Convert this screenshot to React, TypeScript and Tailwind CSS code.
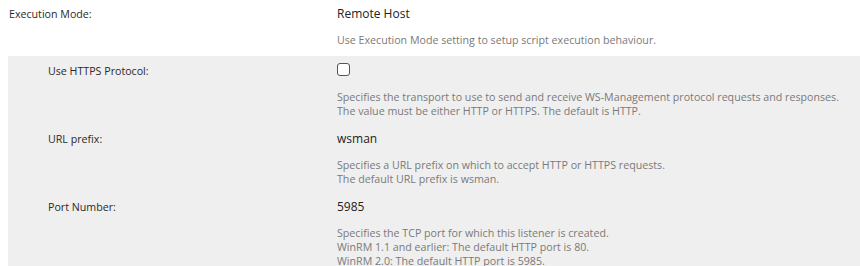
const descClass = 'mt-[11px] text-[10.67px] leading-[14px] text-[#7a7a7a]';

const Row = ({ label, labelWidth, children, desc }: { label: string; labelWidth: string; children: React.ReactNode; desc: string[] }) => (
  <div className="flex pt-[7px] pb-[6px]">
    <div className={`${labelWidth} shrink-0 text-[10.67px] leading-[16px] text-[#2a2a2a]`}>{label}</div>
    <div className="flex-1">
      <div className="h-[16px] text-[12px] leading-[16px] text-[#222]">{children}</div>
      <div className={descClass}>
        {desc.map((line, i) => (
          <div key={i}>{line}</div>
        ))}
      </div>
    </div>
  </div>
);

export default function App() {
  return (
    <div className="h-[266px] w-[860px] overflow-hidden bg-white font-['Open_Sans',sans-serif]">
      <div className="-mt-px pl-[9px] pb-[3px]">
        <Row label="Execution Mode:" labelWidth="w-[328px]" desc={['Use Execution Mode setting to setup script execution behaviour.']}>
          Remote Host
        </Row>
      </div>
      <div className="ml-[8px] bg-[#efefef] pl-[40px] pb-4">
        <Row
          label="Use HTTPS Protocol:"
          labelWidth="w-[289px]"
          desc={[
            'Specifies the transport to use to send and receive WS-Management protocol requests and responses.',
            'The value must be either HTTP or HTTPS. The default is HTTP.',
          ]}
        >
          <div className="h-[13px] w-[13px] rounded-[3px] border border-[#555] bg-white" />
        </Row>
        <Row
          label="URL prefix:"
          labelWidth="w-[289px]"
          desc={['Specifies a URL prefix on which to accept HTTP or HTTPS requests.', 'The default URL prefix is wsman.']}
        >
          wsman
        </Row>
        <Row
          label="Port Number:"
          labelWidth="w-[289px]"
          desc={[
            'Specifies the TCP port for which this listener is created.',
            'WinRM 1.1 and earlier: The default HTTP port is 80.',
            'WinRM 2.0: The default HTTP port is 5985.',
          ]}
        >
          5985
        </Row>
      </div>
    </div>
  );
}
